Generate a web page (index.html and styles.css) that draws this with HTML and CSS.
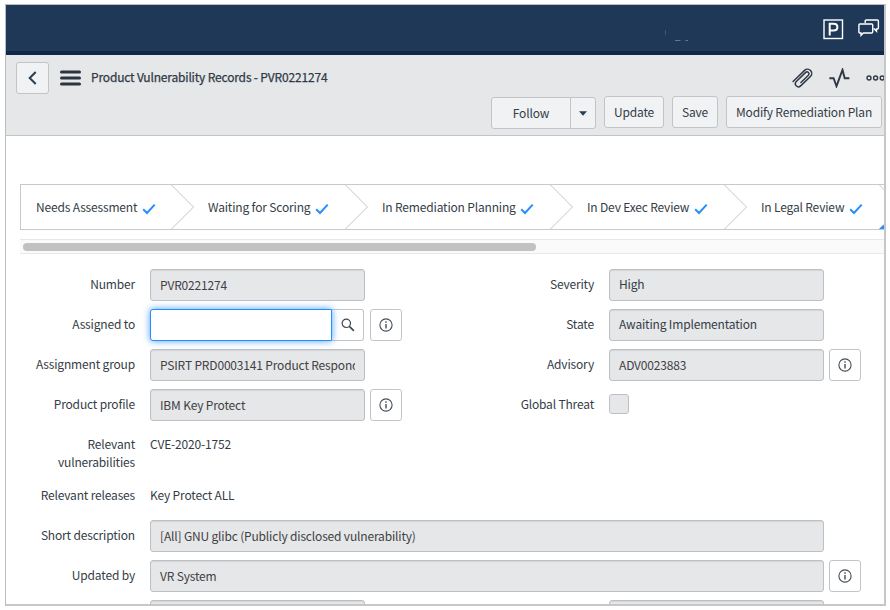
FILE: index.html
```html
<!DOCTYPE html>
<html lang="en">
<head>
<meta charset="utf-8">
<title>Product Vulnerability Records - PVR0221274</title>
<link rel="stylesheet" href="styles.css">
</head>
<body>
<svg class="defs" width="0" height="0">
  <symbol id="check" viewBox="0 0 14 12"><path d="M1.2 6.2 5 10 12.7 1.6" fill="none" stroke="#278efc" stroke-width="2"/></symbol>
  <symbol id="chevron" viewBox="0 0 24 44"><path d="M.5 0 22.5 22 .5 44" fill="none" stroke="#c4c5c9" stroke-width="1"/></symbol>
  <symbol id="info" viewBox="0 0 14 14"><circle cx="7" cy="7" r="6.1" fill="none" stroke="#454d57" stroke-width="1.1"/><path d="M7 3.2v1.5M7 6v4.6" stroke="#454d57" stroke-width="1.4"/></symbol>
</svg>
<div class="frame">
  <header class="banner">
    <svg class="banner-avatar" width="24" height="18" viewBox="0 0 24 18"><path d="M.5 5v5" stroke="#3d5671"/><path d="M10 15.5h5.5M20.5 15.5h2.5" stroke="#607a8b"/></svg>
    <svg class="banner-p" width="21" height="21" viewBox="0 0 21 21"><rect x="1" y="1" width="18.5" height="18.5" fill="none" stroke="#fff" stroke-width="1.4"/><path d="M6.7 16.5V4.7h3.8c2.5 0 3.9 1.2 3.9 3.3s-1.5 3.5-3.9 3.5H6.7" fill="none" stroke="#fff" stroke-width="2"/></svg>
    <svg class="banner-chat" width="22" height="18" viewBox="0 0 22 18"><path d="M7.2 4V2q0-1 1-1h11.2q1 0 1 1v7q0 1-1 1h-.9v2.2L16.4 10h-1" fill="none" stroke="#fff" stroke-width="1.4"/><path d="M1.9 5h11.8q1 0 1 1v7q0 1-1 1H5.4L3 16.3V14H1.9q-1 0-1-1V6q0-1 1-1z" fill="none" stroke="#fff" stroke-width="1.4"/></svg>
  </header>

  <div class="toolbar">
    <div class="title-row">
      <button class="btn back"><svg width="9" height="14" viewBox="0 0 9 14"><path d="M7.7 1 1.7 7l6 6" fill="none" stroke="#293e50" stroke-width="2"/></svg></button>
      <svg class="menu" width="21" height="16" viewBox="0 0 21 16"><path d="M1.5 2h18M1.5 8h18M1.5 14h18" stroke="#2b3540" stroke-width="3" stroke-linecap="round"/></svg>
      <h1>Product Vulnerability Records - PVR0221274</h1>
      <svg class="clip" width="22" height="20" viewBox="0 0 22 20"><g transform="translate(11.2 9.6) rotate(-44)" fill="none" stroke="#2e3945" stroke-width="1.5" stroke-linecap="round"><path d="M-10 -4.2H6a4.2 4.2 0 0 1 0 8.4H-7.6a3.1 3.1 0 0 1 0-6.2H5.4a1.9 1.9 0 0 1 0 3.9H-5"/></g></svg>
      <svg class="pulse" width="21" height="20" viewBox="0 0 21 20"><path d="M.4 10.2h4.2l2.9 8L13.5 1.8l2.2 8.4h4.7" fill="none" stroke="#2e3945" stroke-width="1.9"/></svg>
      <svg class="more" width="19" height="8" viewBox="0 0 19 8"><g fill="none" stroke="#2e3945" stroke-width="1.4"><circle cx="3" cy="4" r="2"/><circle cx="9.6" cy="4" r="2"/><circle cx="16.2" cy="4" r="2"/></g></svg>
    </div>
    <div class="actions">
      <div class="split"><button class="btn follow">Follow</button><button class="btn caret"><svg width="8" height="5" viewBox="0 0 8 5"><path d="M0 .2h8L4 4.8z" fill="#293e50"/></svg></button></div>
      <button class="btn update">Update</button>
      <button class="btn save">Save</button>
      <button class="btn modify">Modify Remediation Plan</button>
    </div>
  </div>

  <div class="process">
    <div class="step s1"><span>Needs Assessment</span><svg class="check"><use href="#check"/></svg></div>
    <div class="step s2"><svg class="chevron"><use href="#chevron"/></svg><span>Waiting for Scoring</span><svg class="check"><use href="#check"/></svg></div>
    <div class="step s3"><svg class="chevron"><use href="#chevron"/></svg><span>In Remediation Planning</span><svg class="check"><use href="#check"/></svg></div>
    <div class="step s4"><svg class="chevron"><use href="#chevron"/></svg><span>In Dev Exec Review</span><svg class="check"><use href="#check"/></svg></div>
    <div class="step s5"><svg class="chevron"><use href="#chevron"/></svg><span>In Legal Review</span><svg class="check"><use href="#check"/></svg></div>
    <div class="step s6"><svg class="chevron" viewBox="0 0 24 44"><path d="M.5 0 22.5 22 .5 44" fill="none" stroke="#c4c5c9"/><path d="M0 44 4 40.2H24V44z" fill="#278efc"/></svg></div>
  </div>
  <div class="track"><div class="thumb"></div></div>

  <div class="form">
    <div class="columns">
      <div class="col">
        <div class="row"><label>Number</label><div class="field low">PVR0221274</div></div>
        <div class="row"><label>Assigned to</label><div class="input"></div><button class="square search"><svg width="14" height="14" viewBox="0 0 14 14"><circle cx="5.3" cy="5.3" r="4.2" fill="none" stroke="#3d4650" stroke-width="1.2"/><path d="m8.4 8.4 4.5 4.5" stroke="#3d4650" stroke-width="1.6"/></svg></button><button class="square info"><svg><use href="#info"/></svg></button></div>
        <div class="row"><label>Assignment group</label><div class="field low"><span class="clipped">PSIRT PRD0003141 Product Respond</span></div></div>
        <div class="row"><label>Product profile</label><div class="field low">IBM Key Protect</div><button class="square info"><svg><use href="#info"/></svg></button></div>
        <div class="row tall"><label>Relevant vulnerabilities</label><span class="plain">CVE-2020-1752</span></div>
        <div class="row"><label>Relevant releases</label><span class="plain">Key Protect ALL</span></div>
      </div>
      <div class="col right">
        <div class="row"><label>Severity</label><div class="field">High</div></div>
        <div class="row"><label>State</label><div class="field">Awaiting Implementation</div></div>
        <div class="row"><label>Advisory</label><div class="field low">ADV0023883</div><button class="square info"><svg><use href="#info"/></svg></button></div>
        <div class="row"><label>Global Threat</label><div class="checkbox"></div></div>
      </div>
    </div>
    <div class="row"><label>Short description</label><div class="field low wide">[All] GNU glibc (Publicly disclosed vulnerability)</div></div>
    <div class="row"><label>Updated by</label><div class="field low wide">VR System</div><button class="square info"><svg><use href="#info"/></svg></button></div>
    <div class="columns">
      <div class="col"><div class="row"><label></label><div class="field"></div></div></div>
      <div class="col right"><div class="row"><label></label><div class="field"></div></div></div>
    </div>
  </div>
</div>
</body>
</html>
```
FILE: styles.css
```css
* { box-sizing: border-box; }
html, body { margin: 0; height: 610px; overflow: hidden; background: #fff; }
body {
  padding: 4px 0 0 5px;
  font-family: "Noto Sans CJK SC", "Noto Sans", sans-serif;
  font-size: 12px;
  line-height: 18px;
  letter-spacing: -.17px;
  color: #343d47;
}
.defs { position: absolute; }
svg { display: block; flex: none; }
button { font: inherit; letter-spacing: inherit; color: inherit; padding: 0; margin: 0; display: flex; align-items: center; justify-content: center; }

.frame {
  width: 881px;
  height: 602px;
  overflow: hidden;
  border: 1px solid #bcbdbe;
  border-right: 2px solid #c6c7c9;
  border-bottom: 2px solid #c6c7c9;
}

.banner {
  height: 50px;
  display: flex;
  background: #1f3857;
  border-bottom: 4px solid #112747;
}
.banner-avatar { margin: 20px 0 0 659px; }
.banner-p { margin: 14px 0 0 134px; }
.banner-chat { margin: 14px 0 0 14px; }

.toolbar { height: 81px; background: #e6e7e9; border-bottom: 1px solid #c3c4c6; }
.title-row { height: 41px; display: flex; align-items: center; padding: 5px 0 0 10px; }
.btn { height: 32px; border: 1px solid #c2c4c8; border-radius: 3px; background: #f1f2f4; white-space: nowrap; }
.back { flex: none; width: 33px; }
.menu { margin-left: 11px; }
h1 { flex: none; margin: 0 0 2px 10px; width: 701px; font-size: 12px; font-weight: 400; -webkit-text-stroke: .25px #303a46; white-space: nowrap; color: #303a46; }
.pulse { margin-left: 15px; }
.more { margin-left: 16px; }
.actions { display: flex; margin-left: 485px; }
.split { display: flex; margin-top: 1px; }
.follow { width: 80px; border-radius: 3px 0 0 3px; }
.caret { width: 26px; margin-left: -1px; border-radius: 0 3px 3px 0; }
.update { width: 60px; margin-left: 8px; }
.save { width: 46px; margin-left: 8px; }
.modify { width: 156px; margin-left: 8px; }

.process { display: flex; height: 46px; margin: 48px 0 0 14px; width: 866px; border: 1px solid #c8c8cd; }
.step { display: flex; flex: none; align-items: center; white-space: nowrap; height: 44px; }
.s1 { width: 150px; padding-left: 15px; }
.s2 { width: 174px; }
.s3 { width: 205px; }
.s4 { width: 174px; }
.s5 { width: 155px; }
.chevron { width: 24px; height: 44px; margin-right: 13px; }
.check { width: 14px; height: 12px; margin: 3px 0 0 4.5px; }
.track { height: 15px; margin: 9px 0 0 14px; padding: 3px 0 0 3px; background: #fafafa; border: solid #e8e8e8; border-width: 1px 0; }
.thumb { width: 513px; height: 8px; border-radius: 4px; background: #c1c1c1; }

.form { padding-top: 15px; }
.columns { display: flex; }
.col { width: 459px; flex: none; }
.row { display: flex; min-height: 32px; margin-bottom: 8px; }
label { width: 129px; margin-right: 15px; flex: none; text-align: right; padding: 6px 0 0 20px; }
.tall { height: 43px; }
.plain { padding-top: 6px; }
.field {
  width: 215px;
  height: 32px;
  flex: none;
  padding: 5px 9px;
  border: 1px solid #bdc0c4;
  border-radius: 3px;
  background: #e6e7e9;
  box-shadow: inset 0 1px 1px rgba(0, 0, 0, .08);
  white-space: nowrap;
}
.low { padding-top: 6px; color: #3f4144; }
.wide { width: 674px; }
.clipped { display: block; overflow: hidden; }
.input {
  width: 182px;
  height: 32px;
  border: 1px solid #278efc;
  border-radius: 3px 0 0 3px;
  background: #fff;
  box-shadow: 0 0 7px rgba(39, 142, 252, .85);
  position: relative;
}
.square { width: 32px; height: 32px; border: 1px solid #c2c4c8; border-radius: 3px; background: #fff; }
.search { border-left: 0; border-radius: 0 3px 3px 0; }
.info { margin-left: 5px; }
.search + .info { margin-left: 6px; }
.info svg { width: 14px; height: 14px; }
.checkbox { width: 20px; height: 20px; margin-top: 5px; border: 1px solid #bdc0c4; border-radius: 3px; background: #e6e7e9; }
```
